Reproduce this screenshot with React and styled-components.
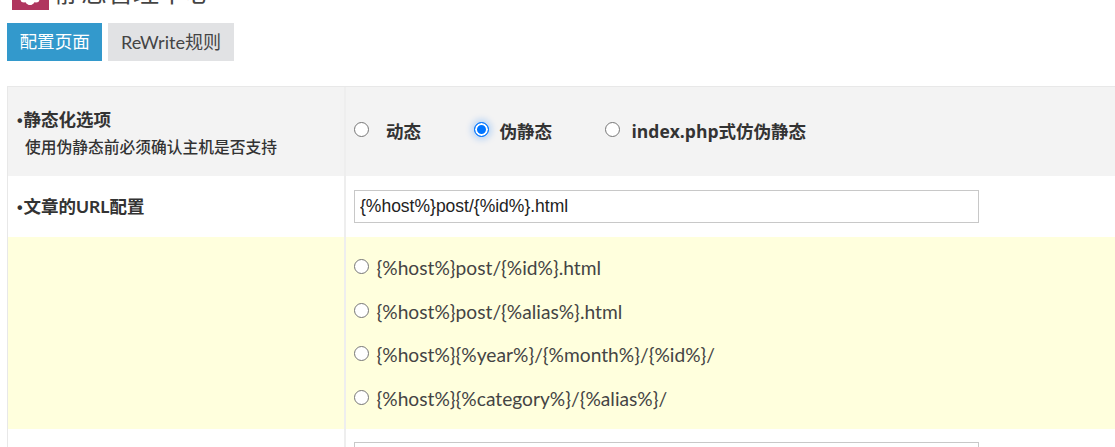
import React from 'react';
import styled, { createGlobalStyle } from 'styled-components';

const Global = createGlobalStyle`
  html, body {
    margin: 0;
    padding: 0;
    background: #fff;
    overflow: hidden;
  }
  body {
    font-family: "Lato", "Noto Sans CJK SC", sans-serif;
    color: #333;
  }
`;

const Page = styled.div`
  width: 1115px;
  height: 447px;
  overflow: hidden;
  padding: 0 0 0 7px;
  box-sizing: border-box;
`;

const Header = styled.div`
  height: 10px;
  display: flex;
  align-items: flex-end;
  gap: 6px;
  padding-left: 5px;
  overflow: hidden;
`;

const HeaderIcon = styled.svg`
  width: 37px;
  height: 37px;
  flex: none;
`;

const Title = styled.h2`
  margin: 0;
  font-size: 26px;
  font-weight: 400;
  line-height: 37px;
  color: #444;
  transform: translateY(1px);
`;

const Tabs = styled.div`
  display: flex;
  gap: 6px;
  margin-top: 13px;
`;

const Tab = styled.div`
  height: 38px;
  line-height: 38px;
  padding: 0 ${p => p.$pad}px;
  font-size: ${p => p.$size}px;
  background: ${p => (p.$active ? '#3399cc' : '#e1e2e4')};
  color: ${p => (p.$active ? '#fff' : '#444')};
`;

const Table = styled.div`
  margin-top: 25px;
  border-top: 1px solid #e8e8e8;
  border-left: 1px solid #e8e8e8;
`;

const Row = styled.div`
  display: grid;
  grid-template-columns: 338px 1fr;
  height: ${p => p.$h}px;
  background: ${p => p.$bg || '#fff'};
`;

const Label = styled.div`
  padding: 2px 0 0 9px;
  border-right: 2px solid #eeeeee;
  display: flex;
  flex-direction: column;
  justify-content: center;
  font-size: 17.5px;
  font-weight: 700;
  color: #333;
  line-height: 26px;
`;

const Bullet = styled.span`
  font-family: "Liberation Sans", sans-serif;
  font-size: 16px;
  margin-right: 1px;
`;

const Hint = styled.span`
  font-size: 15.75px;
  font-weight: 500;
  line-height: 25px;
  padding-left: 8px;
`;

const Cell = styled.div`
  padding-left: 8px;
  display: flex;
  align-items: ${p => p.$align || 'center'};
`;

const Radio = styled.input.attrs({ type: 'radio' })`
  appearance: none;
  box-sizing: border-box;
  width: 15px;
  height: 15px;
  margin: 0;
  flex: none;
  border-radius: 50%;
  border: 1px solid #767676;
  background: #fff;
  position: relative;
  top: -1px;
  &:checked {
    border: 1px solid #0075ff;
    background: #0075ff;
    box-shadow: inset 0 0 0 2px #fff, 0 0 6px 3px rgba(0, 117, 255, 0.22);
  }
`;

const ModeList = styled.div`
  display: flex;
  gap: 52.5px;
  padding-bottom: 3px;
`;

const ModeOption = styled.label`
  display: flex;
  align-items: center;
  gap: ${p => p.$gap}px;
  font-family: "Open Sans", "Noto Sans CJK SC", sans-serif;
  font-size: 17.5px;
  font-weight: 700;
  color: #333;
`;

const TextInput = styled.input`
  box-sizing: border-box;
  width: 625px;
  height: 33px;
  border: 1px solid #c8c8c8;
  padding: 0 5px;
  font-family: "Liberation Sans", Arial, sans-serif;
  font-size: 17.5px;
  color: #222;
  outline: none;
  background: #fff;
`;

const EmptyInput = styled(TextInput)`
  margin-top: 13px;
`;

const PresetList = styled.div`
  display: flex;
  flex-direction: column;
  padding-top: 9px;
`;

const Preset = styled.label`
  display: flex;
  align-items: center;
  gap: 7.5px;
  height: 43.6px;
  font-size: 19.2px;
  color: #444;
`;

const presets = [
  '{%host%}post/{%id%}.html',
  '{%host%}post/{%alias%}.html',
  '{%host%}{%year%}/{%month%}/{%id%}/',
  '{%host%}{%category%}/{%alias%}/',
];

export default function App() {
  return (
    <Page>
      <Global />
      <Header>
        <HeaderIcon viewBox="0 0 37 37">
          <rect width="37" height="37" fill="#b0365f" />
          <g fill="#fff">
            <circle cx="18" cy="27" r="5" />
            <circle cx="12" cy="26" r="3.5" />
            <circle cx="24" cy="26" r="3.5" />
            <circle cx="18" cy="29" r="3" />
          </g>
        </HeaderIcon>
        <Title>静态管理中心</Title>
      </Header>
      <Tabs>
        <Tab $active $pad={12.5} $size={17.6}>配置页面</Tab>
        <Tab $pad={12.5} $size={18.1}>ReWrite规则</Tab>
      </Tabs>
      <Table>
        <Row $h={89} $bg="#f3f3f3">
          <Label>
            <span><Bullet>•</Bullet>静态化选项</span>
            <Hint>使用伪静态前必须确认主机是否支持</Hint>
          </Label>
          <Cell>
            <ModeList>
              <ModeOption $gap={17}><Radio name="mode" />动态</ModeOption>
              <ModeOption $gap={11}><Radio name="mode" defaultChecked />伪静态</ModeOption>
              <ModeOption $gap={12}><Radio name="mode" />index.php式仿伪静态</ModeOption>
            </ModeList>
          </Cell>
        </Row>
        <Row $h={61}>
          <Label><span><Bullet>•</Bullet>文章的URL配置</span></Label>
          <Cell>
            <TextInput defaultValue="{%host%}post/{%id%}.html" />
          </Cell>
        </Row>
        <Row $h={192} $bg="#ffffdd">
          <Label />
          <Cell $align="flex-start">
            <PresetList>
              {presets.map(p => (
                <Preset key={p}><Radio name="preset" />{p}</Preset>
              ))}
            </PresetList>
          </Cell>
        </Row>
        <Row $h={61}>
          <Label />
          <Cell $align="flex-start">
            <EmptyInput />
          </Cell>
        </Row>
      </Table>
    </Page>
  );
}
